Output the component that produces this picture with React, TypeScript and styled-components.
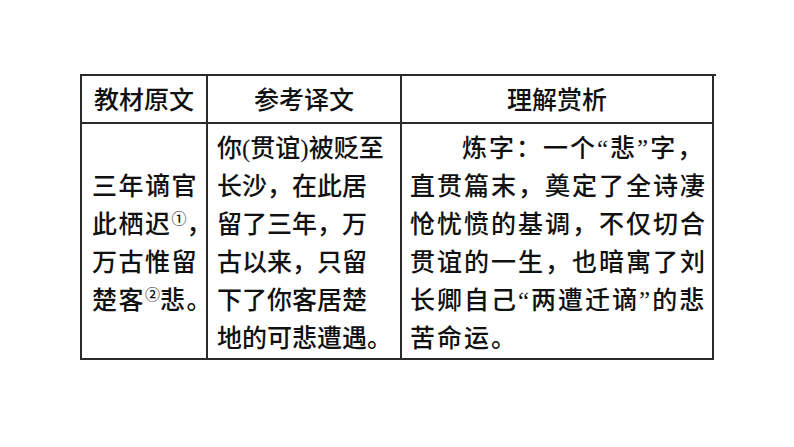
import styled, { createGlobalStyle } from "styled-components";

const GlobalStyle = createGlobalStyle`
  html, body {
    margin: 0;
    padding: 0;
    background: #fff;
  }
`;

const original = ["三年谪官", "此栖迟①，", "万古惟留", "楚客②悲。"];

const translation = [
  "你(贯谊)被贬至",
  "长沙，在此居",
  "留了三年，万",
  "古以来，只留",
  "下了你客居楚",
  "地的可悲遭遇。",
];

const analysis = [
  "炼字：一个“悲”字，",
  "直贯篇末，奠定了全诗凄",
  "怆忧愤的基调，不仅切合",
  "贯谊的一生，也暗寓了刘",
  "长卿自己“两遭迁谪”的悲",
  "苦命运。",
];

// circled numbers are set smaller and raised, like a footnote mark
const renderNotes = (line: string) =>
  line.split(/([①②])/).map((part, i) =>
    part === "①" || part === "②" ? <Note key={i}>{part}</Note> : part
  );

export default function App() {
  return (
    <>
      <GlobalStyle />
      <Page>
        <Table>
          <HeadCell>教材原文</HeadCell>
          <HeadCell>参考译文</HeadCell>
          <HeadCell>理解赏析</HeadCell>

          <BodyCell $middle $pad={10}>
            {original.map((l, i) => (
              <Line key={i} $spacing={1.5}>
                {renderNotes(l)}
              </Line>
            ))}
          </BodyCell>
          <BodyCell $pad={9}>
            {translation.map((l, i) => (
              <Line key={i}>{l}</Line>
            ))}
          </BodyCell>
          <BodyCell $pad={8}>
            {analysis.map((l, i) => (
              <Line key={i} $spacing={2} $indent={i === 0}>
                {l}
              </Line>
            ))}
          </BodyCell>
        </Table>
      </Page>
    </>
  );
}

const Page = styled.div`
  width: 794px;
  height: 447px;
  padding: 74px 0 0 80px;
  box-sizing: border-box;
  font-family: "Liberation Serif", "Noto Sans CJK SC", serif;
  color: #111;
`;

const Table = styled.div`
  display: grid;
  grid-template-columns: 126px 194px 312px;
  grid-template-rows: 48px 236px;
  width: 634px;
  border-top: 2px solid #2a2a2a;
  border-left: 2px solid #2a2a2a;
`;

const Cell = styled.div`
  box-sizing: border-box;
  border-right: 2px solid #2a2a2a;
  border-bottom: 2px solid #2a2a2a;
  font-size: 25px;
  font-weight: 500;
`;

const HeadCell = styled(Cell)`
  display: flex;
  align-items: center;
  justify-content: center;
  padding-bottom: 2px;
`;

const BodyCell = styled(Cell)<{ $middle?: boolean; $pad: number }>`
  display: flex;
  flex-direction: column;
  justify-content: ${(p) => (p.$middle ? "center" : "flex-start")};
  align-items: flex-start;
  padding: 6px 0 0 ${(p) => p.$pad}px;
`;

const Line = styled.div<{ $spacing?: number; $indent?: boolean }>`
  line-height: 38px;
  white-space: nowrap;
  letter-spacing: ${(p) => p.$spacing ?? 0}px;
  padding-left: ${(p) => (p.$indent ? "52px" : "0")};
`;

const Note = styled.span`
  font-size: 15px;
  vertical-align: 9px;
  line-height: 0;
  letter-spacing: 0;
`;
